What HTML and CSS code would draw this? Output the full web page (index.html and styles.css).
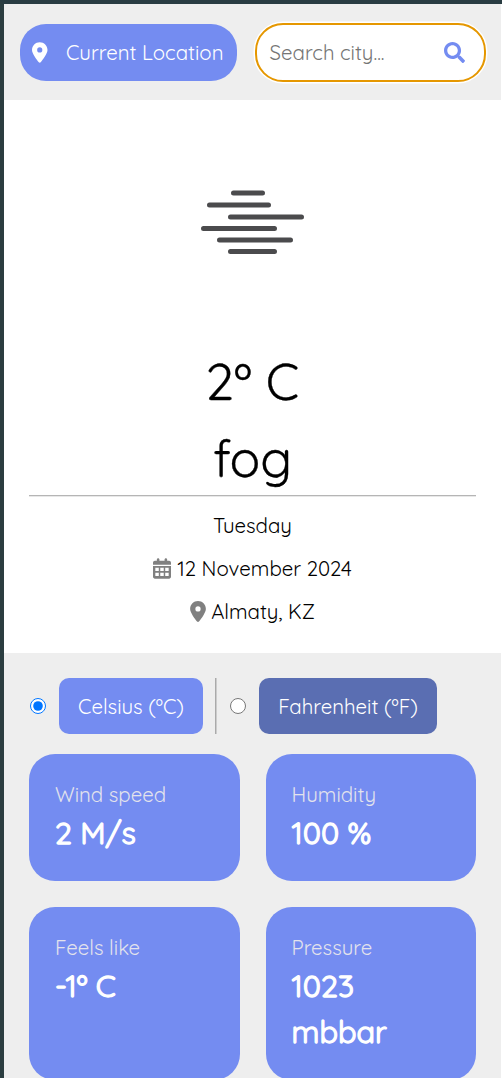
FILE: index.html
```html
<!DOCTYPE html>
<html lang="en">
<head>
<meta charset="utf-8">
<title>Weather</title>
<link rel="stylesheet" href="styles.css">
</head>
<body>
<main class="app">
  <header class="topbar">
    <button class="locate" type="button">
      <svg class="locate-icon" viewBox="0 0 384 512"><path d="M215.7 499.2C267 435 384 279.4 384 192C384 86 298 0 192 0S0 86 0 192c0 87.4 117 243 168.3 307.2c12.3 15.3 35.1 15.3 47.4 0zM192 128a64 64 0 1 1 0 128 64 64 0 1 1 0-128z"/></svg>
      <span>Current Location</span>
    </button>
    <div class="search">
      <span>Search city...</span>
      <svg class="search-icon" viewBox="0 0 512 512"><path d="M505 442.700L405.300 343c-4.500-4.500-10.600-7-17-7H372c27.600-35.300 44-79.700 44-128C416 93.100 322.900 0 208 0S0 93.100 0 208s93.100 208 208 208c48.300 0 92.700-16.400 128-44v16.300c0 6.400 2.500 12.500 7 17l99.700 99.700c9.400 9.400 24.600 9.400 33.900 0l28.300-28.300c9.400-9.400 9.400-24.600.1-34zM208 336c-70.700 0-128-57.200-128-128 0-70.700 57.200-128 128-128 70.700 0 128 57.200 128 128 0 70.700-57.200 128-128 128z"/></svg>
    </div>
  </header>

  <section class="current">
    <svg class="fog" viewBox="0 0 110 70"><path d="M33.500 6h29M9.500 18h59M30.500 30h71M3.500 41.500h71M19.500 53h71M30.500 64.500h44"/></svg>
    <div class="temp">2º C</div>
    <div class="temp cond">fog</div>
    <hr class="rule">
    <div class="line">Tuesday</div>
    <div class="line">
      <svg class="cal" viewBox="0 0 448 512"><path fill-rule="evenodd" d="M128 0c17.700 0 32 14.300 32 32V64H288V32c0-17.700 14.300-32 32-32s32 14.300 32 32V64h48c26.500 0 48 21.500 48 48v48H0V112C0 85.500 21.500 64 48 64H96V32c0-17.700 14.300-32 32-32zM0 192H448V464c0 26.500-21.500 48-48 48H48c-26.500 0-48-21.500-48-48zM58 240v80h86v-80zM181 240v80h86v-80zM304 240v80h86v-80zM58 364v80h86v-80zM181 364v80h86v-80zM304 364v80h86v-80z"/></svg>
      <span>12 November 2024</span>
    </div>
    <div class="line">
      <svg class="pin" viewBox="0 0 384 512"><path d="M215.700 499.200C267 435 384 279.400 384 192C384 86 298 0 192 0S0 86 0 192c0 87.400 117 243 168.300 307.200c12.300 15.300 35.100 15.300 47.400 0zM192 128a64 64 0 1 1 0 128 64 64 0 1 1 0-128z"/></svg>
      <span>Almaty, KZ</span>
    </div>
  </section>

  <section class="details">
    <div class="units">
      <input class="radio" type="radio" name="unit" checked>
      <div class="unit celsius">Celsius (ºC)</div>
      <div class="divider"></div>
      <input class="radio" type="radio" name="unit">
      <div class="unit fahrenheit">Fahrenheit (ºF)</div>
    </div>
    <div class="cards">
      <article class="card"><div class="label">Wind speed</div><div class="value">2 M/s</div></article>
      <article class="card"><div class="label">Humidity</div><div class="value">100 %</div></article>
      <article class="card"><div class="label">Feels like</div><div class="value">-1º C</div></article>
      <article class="card"><div class="label">Pressure</div><div class="value">1023<br>mbbar</div></article>
    </div>
  </section>
</main>
</body>
</html>
```
FILE: styles.css
```css
* { box-sizing: border-box; }
html { background: #fff; }
body { margin: 0; height: 1078px; overflow: hidden; font: 20.4px/32px Quicksand, Lato, sans-serif; color: #000; }
.app { height: 1078px; overflow: hidden; border-top: 4px solid #293c42; border-left: 4px solid #2b3d40; background: #fff; }
.topbar { height: 96px; width: 497px; padding: 19px 16px 0; display: flex; gap: 18px; background: #eee; }
.locate { flex: none; width: 217px; height: 56.5px; margin-top: 1px; padding: 0 0 0 12px; border: 0; border-radius: 26px; display: flex; align-items: center; background: #748cf1; color: #fff; font: inherit; }
.locate span { margin-left: 18.5px; padding-top: 2px; white-space: nowrap; }
.locate-icon { width: 15.5px; height: 21px; fill: #fff; }
.search { flex: none; width: 230.5px; height: 59px; padding: 0 18.5px 0 12.5px; border: 2px solid #e59700; border-radius: 28px; box-shadow: 0 0 0 1.5px #fff; background: #fff; display: flex; align-items: center; justify-content: space-between; color: #757575; }
.search span { padding-top: 1px; }
.search-icon { width: 21px; height: 21px; fill: #748cf1; }
.current { height: 553px; width: 497px; padding: 87px 25px 0; display: flex; flex-direction: column; align-items: center; }
.fog { width: 110px; height: 70px; margin-left: 5px; fill: none; stroke: #4b4b4d; stroke-width: 5; stroke-linecap: round; filter: blur(.5px); }
.temp { height: 77px; margin-top: 86px; font-size: 51px; line-height: 77px; -webkit-text-stroke: .3px #000; }
.cond { margin-top: 0; }
.rule { width: 447px; height: 2px; margin: -2px 0 7px; border: 0; border-top: 1px solid #b5b5b5; border-bottom: 1px solid #e8e8e8; }
.line { height: 43px; display: flex; align-items: center; white-space: nowrap; }
.cal { width: 18px; height: 21px; margin-right: 6px; fill: gray; }
.pin { width: 16px; height: 21px; margin-right: 5px; fill: gray; }
.details { width: 497px; height: 425px; padding: 25px 25px 0; background: #eee; }
.units { display: flex; align-items: center; height: 56px; }
.radio { width: 16px; height: 16px; margin: 0 14px 0 1px; flex: none; }
.unit { height: 56px; padding-top: 2px; border-radius: 10px; display: flex; align-items: center; justify-content: center; color: #fff; white-space: nowrap; }
.celsius { width: 144px; margin-left: -1px; background: #748cf1; }
.fahrenheit { width: 178px; margin-left: -1px; background: #5a6eb2; }
.divider { width: 2px; height: 56px; margin: 0 12px 0 12px; border-left: 1px solid #aaa; border-right: 1px solid #ccc; }
.cards { display: grid; grid-template-columns: 1fr 1fr; gap: 26px; margin-top: 20px; grid-template-rows: 127px 173px; width: 447px; }
.card { padding: 25px 26px; border-radius: 26px; background: #748cf1; color: #fff; }
.label { height: 31px; color: #e3e3ec; }
.value { font-size: 30.6px; font-weight: 400; line-height: 46px; -webkit-text-stroke: 1.3px #fff; }
```
